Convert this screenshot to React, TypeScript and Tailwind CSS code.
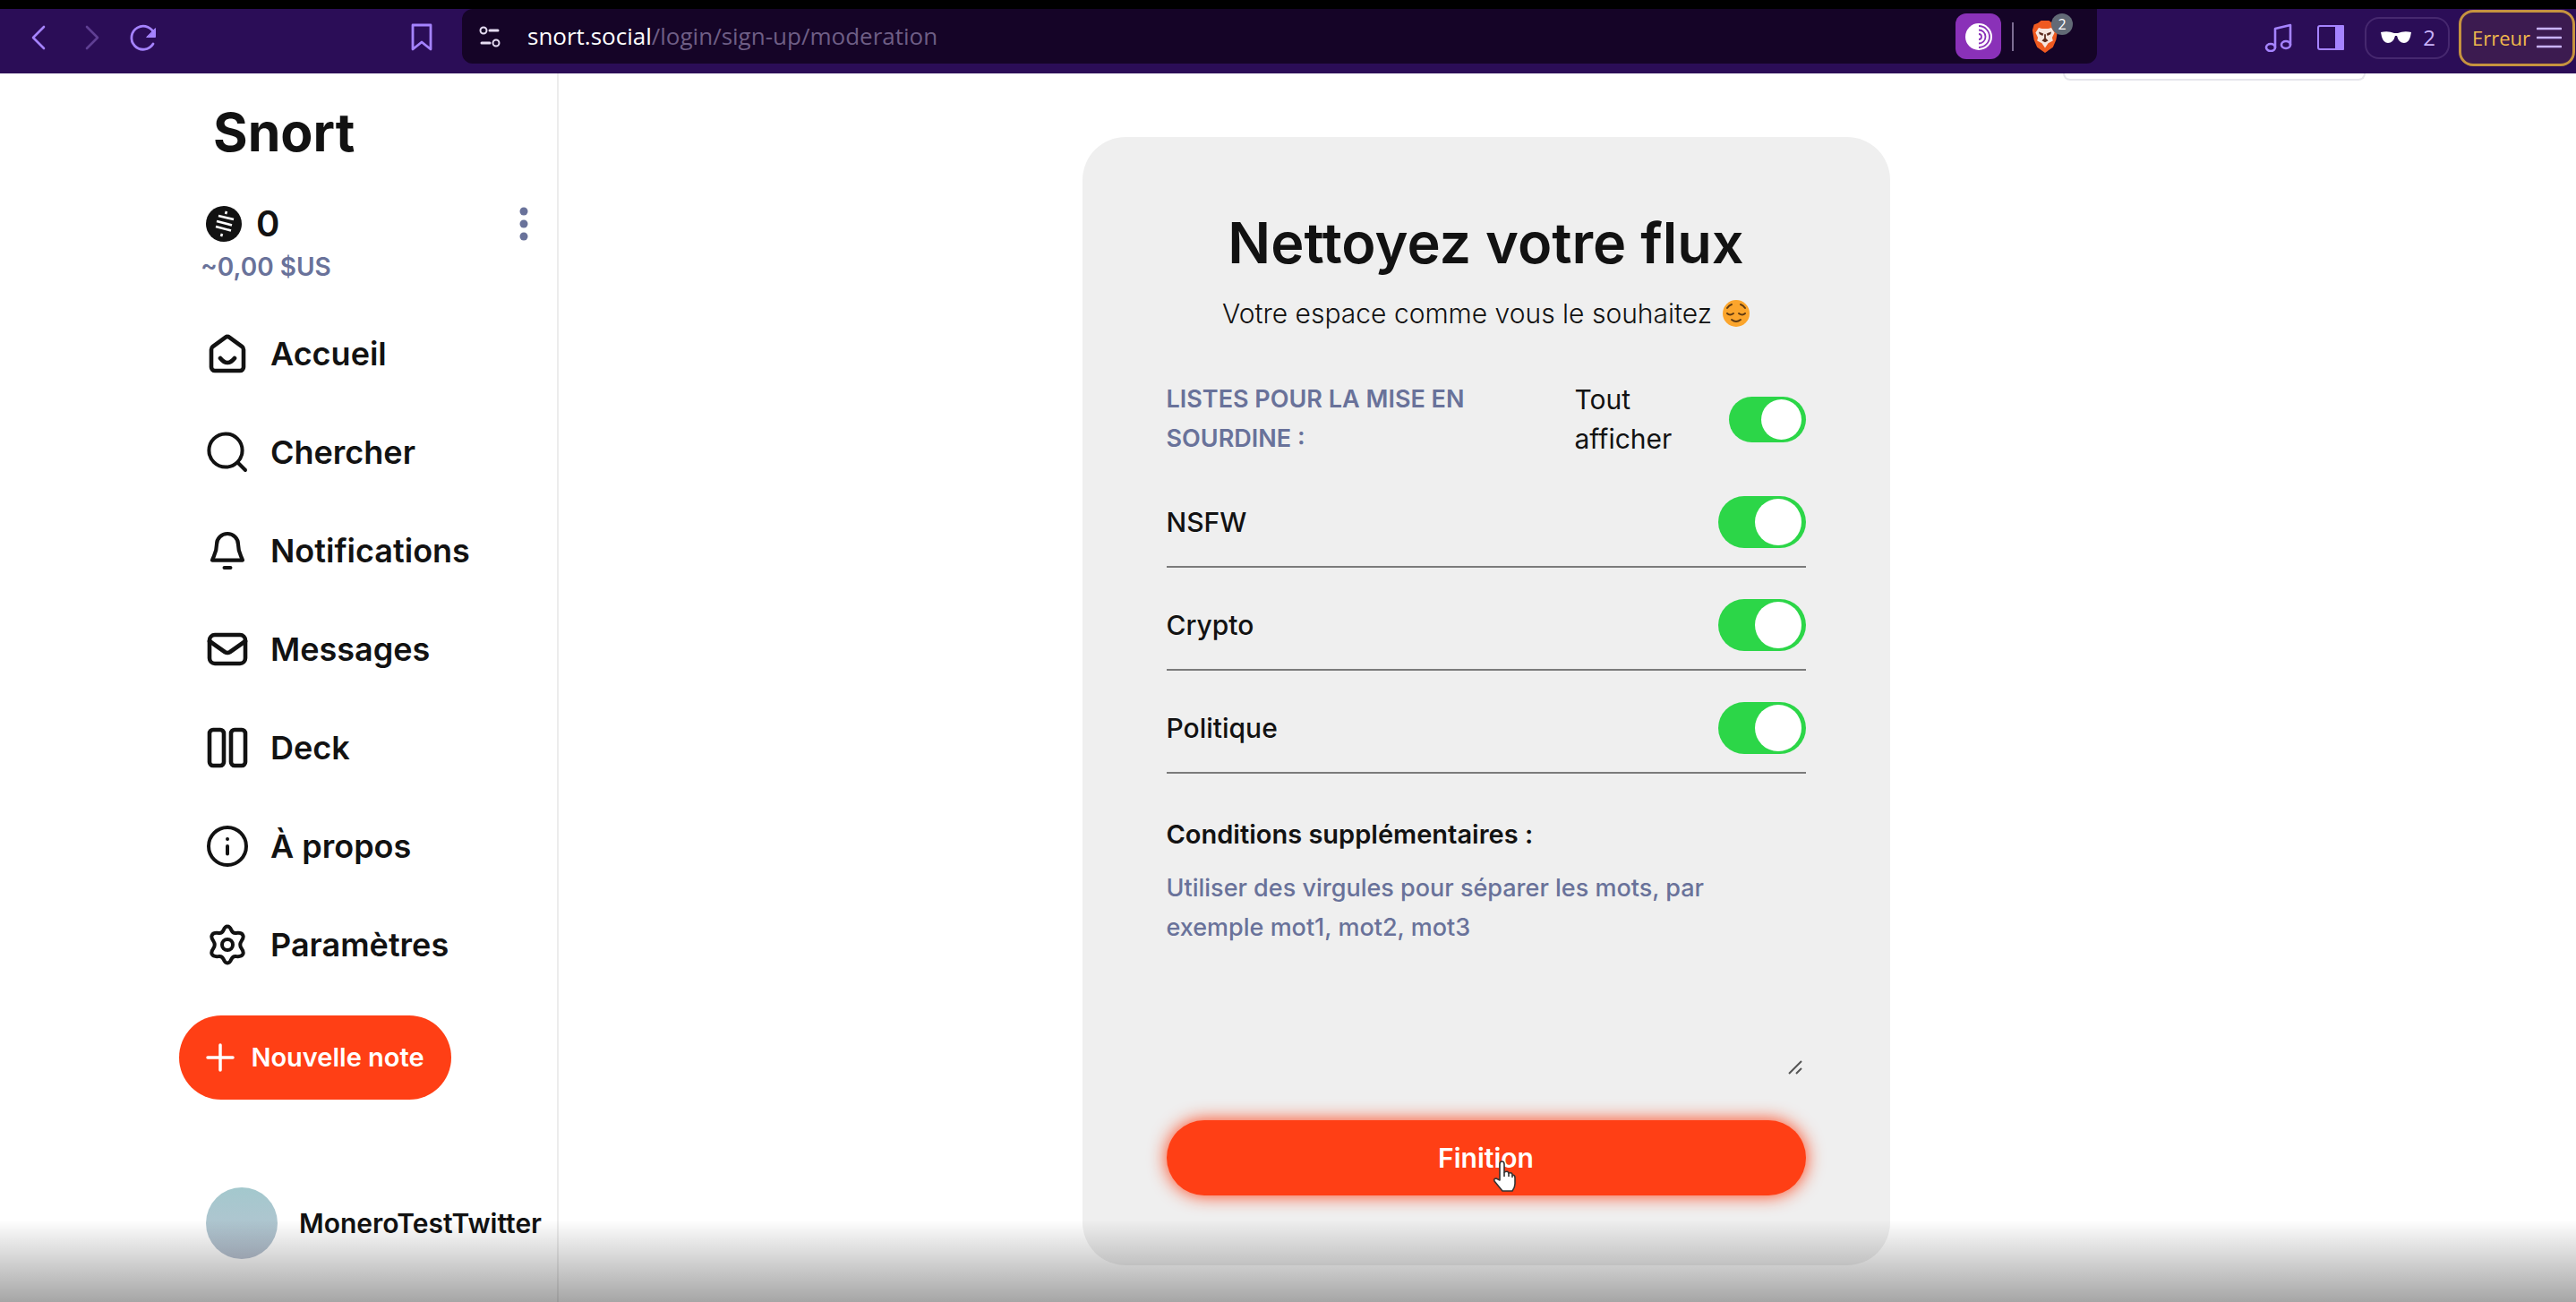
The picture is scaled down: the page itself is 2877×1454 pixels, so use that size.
import { useId } from "react";
import type { ReactNode } from "react";

const stroke = {
  fill: "none",
  stroke: "currentColor",
  strokeWidth: 2,
  strokeLinecap: "round" as const,
  strokeLinejoin: "round" as const,
};

function Icon({ children, className, box = "0 0 24 24" }: { children: ReactNode; className: string; box?: string }) {
  return (
    <svg viewBox={box} className={className} aria-hidden="true" {...stroke}>
      {children}
    </svg>
  );
}

function BrowserBar() {
  return (
    <header className="flex h-[82px] items-start border-t-[10px] border-black bg-[#2b0d57] pr-px text-[#a583ff]">
      <div className="flex h-16 w-[516px] shrink-0 items-center pl-8">
        <button aria-label="Retour">
          <Icon className="h-8 w-6" box="0 0 24 32"><path d="M17 4 5 16l12 12" strokeWidth="2.6" /></Icon>
        </button>
        <button aria-label="Suivant" className="ml-9 text-[#5f3f93]">
          <Icon className="h-8 w-6" box="0 0 24 32"><path d="m5 4 12 12L5 28" strokeWidth="2.6" /></Icon>
        </button>
        <button aria-label="Recharger" className="ml-7">
          <Icon className="size-8" box="0 0 32 32">
            <path d="M28.500 13A13 13 0 1 0 27 23" strokeWidth="2.800" />
            <path d="M29.500 6v9.500H20z" fill="currentColor" stroke="currentColor" strokeWidth="1" />
          </Icon>
        </button>
        <button aria-label="Ajouter un favori" className="ml-auto mr-[33px]">
          <Icon className="h-8 w-6" box="0 0 24 32"><path d="M2 2h20v27l-10-8-10 8z" strokeWidth="2.800" /></Icon>
        </button>
      </div>
      <div className="flex h-[61px] min-w-0 flex-1 items-center rounded-b-xl rounded-tl-xl bg-[#150427] pr-[43px] pl-[18px]">
        <Icon className="size-7 shrink-0 text-[#e5dcf2]" box="0 0 28 28">
          <circle cx="6" cy="7" r="3.500" /><path d="M13 7h9M4 21h9" strokeWidth="3" /><circle cx="20" cy="21" r="3.500" />
        </Icon>
        <div className="relative ml-[27px] min-w-0 flex-1 font-['Open_Sans'] text-[26px] text-[#6e5e85]">
          <p className="truncate">
            <span className="text-white">snort.social</span>/login/sign-up/moderation
          </p>
          <input aria-label="Adresse" className="absolute inset-0 w-full outline-none" />
        </div>
        <button aria-label="Tor" className="flex size-[51px] items-center justify-center rounded-xl bg-[#8a31b8]">
          <Icon className="size-8" box="0 0 32 32">
            <circle cx="16" cy="16" r="15" fill="#fff" stroke="none" />
            <g stroke="#8a31b8" strokeWidth="1.800" strokeLinecap="butt">
              <path d="M16 4a12 12 0 0 1 0 24M16 8.500a7.500 7.500 0 0 1 0 15M16 13a3 3 0 0 1 0 6" />
            </g>
          </Icon>
        </button>
        <span className="ml-3 h-8 w-[2px] bg-[#7d6d92]" />
        <button aria-label="Brave Shields, 2 éléments bloqués" className="relative ml-5">
          <svg viewBox="0 0 34 40" preserveAspectRatio="none" className="h-9 w-[30px]" aria-hidden="true">
            <path d="m8 3 4-3h10l4 3 5 2 2 7-2 12-4 9-10 7-10-7-4-9L1 12l2-7z" fill="#ef5a20" />
            <path d="m9 9 4 1h8l4-1 4 6-3 6 1 4-6 3-4 6-4-6-6-3 1-4-3-6z" fill="#f6e6df" />
            <path d="m9 14 6 2-1 3-4-2zm16 0-6 2 1 3 4-2zM13 25l3-3v-5h2v5l3 3-4 2z" fill="#5b2a1c" />
          </svg>
          <span className="absolute -top-2 -right-4 flex size-6 items-center justify-center rounded-full bg-[#626a76] font-['Open_Sans'] text-base text-white">2</span>
        </button>
      </div>
      <div className="flex h-16 w-[534px] shrink-0 items-center justify-end">
        <button aria-label="Médias">
          <Icon className="size-8" box="0 0 32 32">
            <g strokeWidth="2.600"><ellipse cx="7" cy="27" rx="5" ry="4" /><ellipse cx="24" cy="24" rx="5" ry="4" /><path d="M12 27V6l17-4v22M12 12" /></g>
          </Icon>
        </button>
        <button aria-label="Panneau latéral" className="ml-[26px]">
          <Icon className="size-8" box="0 0 32 32"><rect x="2" y="3" width="28" height="26" rx="2" /><path d="M22 3h8v26h-8z" fill="currentColor" /></Icon>
        </button>
        <button className="ml-[22px] flex h-[47px] w-[95px] items-center justify-between rounded-2xl border-2 border-[#46286f] pr-3.5 pl-4 font-['Open_Sans'] text-2xl text-[#c9b3fa]">
          <svg viewBox="0 0 34 14" className="h-3.5 w-[34px]" fill="#fff" aria-hidden="true"><path d="M0 1q8-2 15 1h4q7-3 15-1l-1 5q-2 7-7 7-6 0-8-8h-2q-2 8-8 8-5 0-7-7z" /></svg>
          2
        </button>
        <button className="ml-2.5 flex h-[63px] w-[130px] items-center justify-between rounded-2xl border-[3px] border-[#c6933f] bg-[#3c1b50] pr-3 pl-3 font-['Open_Sans'] text-[22px] text-[#f2b94c]">
          Erreur
          <Icon className="h-6 w-7 text-[#c9b3fa]" box="0 0 28 24"><path d="M1 2h26M1 12h26M1 22h26" strokeWidth="2.600" /></Icon>
        </button>
      </div>
    </header>
  );
}

const navItems: { label: string; icon: ReactNode }[] = [
  {
    label: "Accueil",
    icon: <g strokeWidth="2.300"><path d="M3 9.700a2 2 0 0 1 .8-1.600l7-5.200a2 2 0 0 1 2.400 0l7 5.200a2 2 0 0 1 .8 1.600V19.500a2 2 0 0 1-2 2H5a2 2 0 0 1-2-2z" /><path d="M8 14.500q4 5 8 0" /></g>,
  },
  { label: "Chercher", icon: <><circle cx="11" cy="11" r="9.300" /><path d="m18 18 4 4" /></> },
  { label: "Notifications", icon: <path d="M10.300 21.500h3.400M12 2.500a6 6 0 0 0-6 6c0 4.500-1.500 6-2.500 8.800h17C19.500 14.500 18 13 18 8.500a6 6 0 0 0-6-6z" strokeWidth="2.100" /> },
  { label: "Messages", icon: <g strokeWidth="2.300"><rect x="2" y="4" width="20" height="16" rx="3" /><path d="m2 7.500 8.500 6q1.500 1 3 0l8.500-6" /></g> },
  { label: "Deck", icon: <g strokeWidth="2.300"><rect x="2" y="2" width="8" height="20" rx="2" /><rect x="14" y="2" width="8" height="20" rx="2" /></g> },
  { label: "À propos", icon: <><circle cx="12" cy="12" r="10.500" /><path d="M12 16.300v-4.300M12 8h.01" /></> },
  {
    label: "Paramètres",
    icon: <><circle cx="12" cy="12" r="3" /><path d="M9.700 4.100C10.300 2.600 11 1.800 12 1.800s1.700.8 2.300 2.300c.5 1.100 1.500 1.600 2.600 1.400 1.600-.2 3-.1 3.700 1.100s.1 2.200-.8 3.400c-.8 1.200-.8 2.800 0 4 .9 1.200 1.500 2.200.8 3.400s-2.100 1.300-3.700 1.100c-1.100-.2-2.100.3-2.600 1.400-.6 1.500-1.300 2.300-2.300 2.300s-1.700-.8-2.300-2.300c-.5-1.100-1.500-1.600-2.600-1.400-1.600.2-3 .1-3.700-1.100s-.1-2.200.8-3.400c.8-1.200.8-2.800 0-4-.9-1.200-1.500-2.200-.8-3.400s2.100-1.300 3.700-1.100c1.100.2 2.100-.3 2.600-1.400z" /></>,
  },
];

function Sidebar() {
  return (
    <aside className="flex w-[624px] shrink-0 flex-col border-r-2 border-[#ececec] pl-[200px]">
      <h1 className="mt-[30px] pl-[38px] text-[59px] leading-[72px] font-bold">Snort</h1>
      <div className="mt-9 flex items-start justify-between pr-6">
        <div className="pl-6">
          <p className="flex h-[60px] items-center gap-4 pl-1.5 text-[40px] font-semibold">
            <svg viewBox="0 0 40 40" className="size-10" aria-hidden="true">
              <circle cx="20" cy="20" r="20" fill="#121212" />
              <path d="m14 11 17 4M12 17l17 4.500M11 23l17 4.500M23 6l-1 3M18 31l-1 3" stroke="#fff" strokeWidth="2.600" />
            </svg>
            0
          </p>
          <p className="text-[28px] leading-9 font-semibold text-[#69729a]">~0,00 $US</p>
        </div>
        <button aria-label="Options du portefeuille" className="flex h-[60px] items-center px-2 text-[#69729a]">
          <svg viewBox="0 0 10 38" className="h-[38px] w-2.5" fill="currentColor" aria-hidden="true">
            <circle cx="5" cy="5" r="4.500" /><circle cx="5" cy="19" r="4.500" /><circle cx="5" cy="33" r="4.500" />
          </svg>
        </button>
      </div>
      <nav className="mt-6 flex flex-col pl-[30px]">
        {navItems.map((item) => (
          <a key={item.label} href="#" className="flex h-[110px] items-center gap-6 text-[36px] font-semibold">
            <Icon className="size-12">{item.icon}</Icon>
            {item.label}
          </a>
        ))}
      </nav>
      <button className="mt-6 flex h-[94px] w-[304px] items-center justify-center gap-[18px] rounded-full bg-[#ff3f15] text-[29px] font-semibold text-white">
        <Icon className="size-8" box="0 0 32 32"><path d="M16 2v28M2 16h28" strokeWidth="3.500" /></Icon>
        Nouvelle note
      </button>
      <a href="#" className="mt-[98px] flex items-center gap-6 pl-[30px] text-[30px] font-semibold">
        <span className="size-20 shrink-0 rounded-full bg-linear-to-b from-[#a3c8cd] to-[#b9c3d2]" />
        MoneroTestTwitter
      </a>
    </aside>
  );
}

function Toggle({ id, small = false }: { id: string; small?: boolean }) {
  return (
    <span className={small ? "relative flex h-[51px] w-[86px] shrink-0" : "relative flex h-[58px] w-[98px] shrink-0"}>
      <input
        id={id}
        type="checkbox"
        role="switch"
        defaultChecked
        className="peer size-full cursor-pointer appearance-none rounded-full bg-gray-400 checked:bg-[#2cd648]"
      />
      <span className="pointer-events-none absolute inset-y-[3px] left-[3px] aspect-square rounded-full bg-white peer-checked:right-[5px] peer-checked:left-auto" />
    </span>
  );
}

function MuteRow({ label }: { label: string }) {
  const id = useId();
  return (
    <div className="flex items-center justify-between border-b-2 border-[#7b7b7b] pt-[35px] pb-5 text-[30px] font-medium">
      <label htmlFor={id}>{label}</label>
      <Toggle id={id} />
    </div>
  );
}

function HandPointer() {
  return (
    <svg viewBox="0 0 26 36" className="absolute top-[45px] left-[calc(50%+7px)] h-9 w-[26px]" aria-hidden="true">
      <path d="M8 22V4q0-3 2.500-3T13 4v9q4-2 5 1 4-1 4 2 3 0 3 3v7q0 4-3 8H11L2 23q-1-3 2-3z" fill="#fff" stroke="#333" strokeWidth="1.600" strokeLinejoin="round" />
      <path d="M13 13v5M18 14v4M22 16v3" stroke="#333" strokeWidth="1.600" />
    </svg>
  );
}

function ModerationCard() {
  return (
    <main className="flex flex-1 flex-col items-center pr-[182px]">
      <div className="mr-[53px] h-2 w-[338px] self-end rounded-b-3xl border-2 border-t-0 border-[#e6e6ec]" />
      <section className="mt-[63px] flex w-[902px] flex-col rounded-[48px] bg-[#efefef] px-[94px] pt-[75px] pb-[78px]">
        <h2 className="text-center text-[63px] leading-[86px] font-semibold whitespace-nowrap">Nettoyez votre flux</h2>
        <p className="mt-3.5 flex items-center justify-center gap-3 text-[30px] leading-[44px] font-light">
          Votre espace comme vous le souhaitez
          <svg viewBox="0 0 30 30" className="size-[30px]" fill="none" strokeLinecap="round" role="img" aria-label="soulagé">
            <circle cx="15" cy="15" r="15" fill="#fba52c" />
            <path d="M5 15q3 3 7 0M18 15q4 3 7 0M10 22q5 4 10 0M5 9q2-3 5-4M25 9q-2-3-5-4" stroke="#5f3a12" strokeWidth="2" />
          </svg>
        </p>
        <div className="mt-[52px] flex items-center">
          <h3 className="w-[456px] text-[27px] leading-[44px] font-semibold text-[#69729a]">LISTES POUR LA MISE EN<br />SOURDINE :</h3>
          <label htmlFor="show-all" className="flex-1 text-[30px] leading-[44px]">Tout<br />afficher</label>
          <Toggle id="show-all" small />
        </div>
        <div className="mt-[7px]">
          <MuteRow label="NSFW" />
          <MuteRow label="Crypto" />
          <MuteRow label="Politique" />
        </div>
        <label htmlFor="extra-terms" className="mt-[46px] text-[29px] leading-[44px] font-semibold">Conditions supplémentaires :</label>
        <div className="relative mt-4 flex h-[236px]">
          <textarea
            id="extra-terms"
            placeholder="Utiliser des virgules pour séparer les mots, par exemple mot1, mot2, mot3"
            className="flex-1 resize-none text-[27px] leading-[44px] font-medium placeholder:text-[#69729a]"
          />
          <svg viewBox="0 0 16 16" className="absolute right-1 bottom-1.5 size-4" fill="none" stroke="#555" strokeWidth="2" aria-hidden="true">
            <path d="M1 15 15 1M9 15l6-6" />
          </svg>
        </div>
        <button className="relative mt-[45px] h-[84px] rounded-full bg-[#ff3f15] text-[30px] font-semibold text-white shadow-[0_0_20px_#ff3f15]">
          Finition
          <HandPointer />
        </button>
      </section>
    </main>
  );
}

export default function App() {
  return (
    <div className="relative flex min-h-screen flex-col bg-white font-[Inter,sans-serif] text-[#121212]">
      <BrowserBar />
      <div className="flex flex-1">
        <Sidebar />
        <ModerationCard />
      </div>
      <div className="pointer-events-none absolute inset-x-0 bottom-0 h-[92px] bg-linear-to-b from-transparent to-black/35" />
    </div>
  );
}
